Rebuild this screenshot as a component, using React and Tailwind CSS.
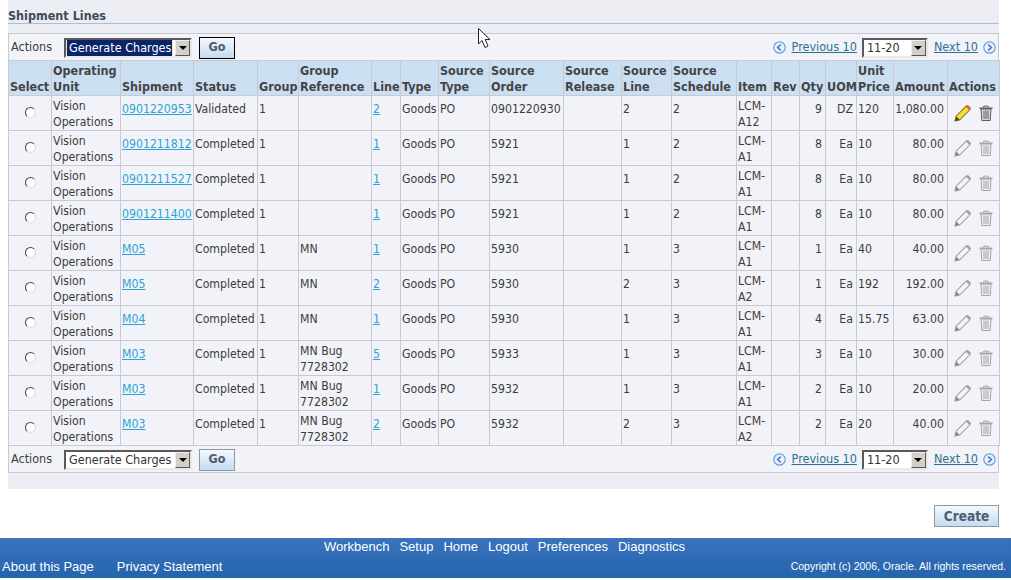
import React from 'react';

const widths = [43, 69, 73, 64, 41, 73, 29, 38, 51, 74, 58, 50, 65, 35, 28, 26, 31, 37, 54, 52];

const headers = [
  ['Select'], ['Operating', 'Unit'], ['Shipment'], ['Status'], ['Group'], ['Group', 'Reference'], ['Line'], ['Type'],
  ['Source', 'Type'], ['Source', 'Order'], ['Source', 'Release'], ['Source', 'Line'], ['Source', 'Schedule'],
  ['Item'], ['Rev'], ['Qty'], ['UOM'], ['Unit', 'Price'], ['Amount'], ['Actions'],
];

const rows = [
  { ship: '0901220953', status: 'Validated', ref: [], line: '2', order: '0901220930', srcLine: '2', sched: '2', item: 'A12', qty: '9', uom: 'DZ', price: '120', amount: '1,080.00', active: true },
  { ship: '0901211812', status: 'Completed', ref: [], line: '1', order: '5921', srcLine: '1', sched: '2', item: 'A1', qty: '8', uom: 'Ea', price: '10', amount: '80.00' },
  { ship: '0901211527', status: 'Completed', ref: [], line: '1', order: '5921', srcLine: '1', sched: '2', item: 'A1', qty: '8', uom: 'Ea', price: '10', amount: '80.00' },
  { ship: '0901211400', status: 'Completed', ref: [], line: '1', order: '5921', srcLine: '1', sched: '2', item: 'A1', qty: '8', uom: 'Ea', price: '10', amount: '80.00' },
  { ship: 'M05', status: 'Completed', ref: ['MN'], line: '1', order: '5930', srcLine: '1', sched: '3', item: 'A1', qty: '1', uom: 'Ea', price: '40', amount: '40.00' },
  { ship: 'M05', status: 'Completed', ref: ['MN'], line: '2', order: '5930', srcLine: '2', sched: '3', item: 'A2', qty: '1', uom: 'Ea', price: '192', amount: '192.00' },
  { ship: 'M04', status: 'Completed', ref: ['MN'], line: '1', order: '5930', srcLine: '1', sched: '3', item: 'A1', qty: '4', uom: 'Ea', price: '15.75', amount: '63.00' },
  { ship: 'M03', status: 'Completed', ref: ['MN Bug', '7728302'], line: '5', order: '5933', srcLine: '1', sched: '3', item: 'A1', qty: '3', uom: 'Ea', price: '10', amount: '30.00' },
  { ship: 'M03', status: 'Completed', ref: ['MN Bug', '7728302'], line: '1', order: '5932', srcLine: '1', sched: '3', item: 'A1', qty: '2', uom: 'Ea', price: '10', amount: '20.00' },
  { ship: 'M03', status: 'Completed', ref: ['MN Bug', '7728302'], line: '2', order: '5932', srcLine: '2', sched: '3', item: 'A2', qty: '2', uom: 'Ea', price: '20', amount: '40.00' },
];

function Pencil({ active }) {
  const body = active ? '#f5dc3c' : '#f4f4f4';
  const edge = active ? '#8a7a10' : '#a0a0a0';
  const tip = active ? '#e8603c' : '#a0a0a0';
  return (
    <svg width="18" height="18" viewBox="0 0 17 17">
      <path d="M1 16 L2 11.5 L11.5 2 L15 5.5 L5.5 15 Z" fill={body} stroke={edge} strokeWidth="1" />
      <path d="M11.5 2 L13 0.8 L16.2 4 L15 5.5 Z" fill={tip} />
      <path d="M1 16 L2 11.5 L5.5 15 Z" fill={active ? '#4a4a20' : '#8a8a8a'} />
    </svg>
  );
}

function Trash({ active }) {
  const c = active ? '#5e5e5e' : '#a4a4a4';
  const fill = active ? '#d8d8d8' : '#f0f0f0';
  return (
    <svg width="14" height="16" viewBox="0 0 14 16">
      <path d="M0.5 2.5 H13.5 V4 H0.5 Z" fill={c} />
      <path d="M4 2 Q7 0 10 2" fill="none" stroke={c} strokeWidth="1.2" />
      <path d="M2 4 L2.8 15.5 H11.2 L12 4 Z" fill={fill} stroke={c} strokeWidth="1" />
      <path d="M5 5.5 V14 M7 5.5 V14 M9 5.5 V14" stroke={c} strokeWidth="1" />
    </svg>
  );
}

function Arrow({ dir }) {
  return (
    <svg width="13" height="13" viewBox="0 0 13 13">
      <circle cx="6.5" cy="6.5" r="5.7" fill="#e8f1fb" stroke="#6f9fdc" strokeWidth="1.2" />
      <path d={dir === 'left' ? 'M7.8 3.6 L4.6 6.5 L7.8 9.4' : 'M5.2 3.6 L8.4 6.5 L5.2 9.4'} fill="none" stroke="#3f78c8" strokeWidth="1.5" />
    </svg>
  );
}

function SelectBox({ label, width, focused }) {
  return (
    <div className={`flex h-[20px] items-stretch border-2 border-t-[#5a5a5a] border-l-[#5a5a5a] border-r-[#e8e8e8] border-b-[#e8e8e8] bg-white ${width}`}>
      <div className="flex flex-1 items-center pl-[1px] overflow-hidden">
        <span className={`whitespace-nowrap pl-[2px] pr-[1px] leading-[16px] ${focused ? 'bg-[#0a246a] text-white outline-1 outline-dotted outline-[#f0d070]' : 'text-[#333333]'}`}>{label}</span>
      </div>
      <div className="flex w-[15px] items-center justify-center border border-t-[#eeeeee] border-l-[#eeeeee] border-r-[#555555] border-b-[#555555] bg-[#d4d0c8]">
        <div className="h-0 w-0 border-x-[4px] border-t-[4px] border-x-transparent border-t-black" />
      </div>
    </div>
  );
}

function Button({ children, focused, className }) {
  return (
    <button className={`h-[22px] rounded-none border bg-gradient-to-b from-[#f4f8fc] to-[#c4dcf0] font-bold text-[#4f5d70] ${focused ? 'border-black' : 'border-[#8a9aa8]'} ${className}`}>
      {children}
    </button>
  );
}

function ActionBar({ focused }) {
  return (
    <div className="flex h-[26px] items-center bg-[#f2f3f8] pt-[1px] pl-[2px] pr-[2px]">
      <span className="mr-[12px] text-[#3c3c3c]">Actions</span>
      <SelectBox label="Generate Charges" width="w-[128px]" focused={focused} />
      <Button focused={focused} className="ml-[7px] w-[36px]">Go</Button>
      <div className="ml-auto flex items-center">
        <Arrow dir="left" />
        <a className="ml-[6px] text-[#2b7194] underline">Previous 10</a>
        <div className="ml-[5px]"><SelectBox label="11-20" width="w-[66px]" /></div>
        <a className="ml-[6px] text-[#2b7194] underline">Next 10</a>
        <div className="ml-[5px]"><Arrow dir="right" /></div>
      </div>
    </div>
  );
}

function Cell({ children, align = 'left', multi }) {
  return (
    <td className={`border border-[#c9c8d3] align-top px-[1px] text-[12.2px] leading-[16px] whitespace-nowrap ${multi ? 'pt-[2px]' : 'pt-[5px]'} ${align === 'right' ? 'text-right pr-[3px]' : 'text-left'}`}>
      {children}
    </td>
  );
}

function Radio() {
  return (
    <div className="mx-auto mt-[11px] h-[11px] w-[11px] rounded-full border border-t-[#444444] border-l-[#444444] border-r-[#d8d8d8] border-b-[#e0e0e0] bg-white" />
  );
}

export default function App() {
  return (
    <div className="relative h-[580px] w-[1011px] overflow-hidden bg-white font-['DejaVu_Sans','Liberation_Sans',sans-serif] text-[12.5px] [font-stretch:condensed]">
      <div className="ml-[8px] h-[489px] w-[991px] bg-[#ecedf3]">
        <div className="h-[33px] pt-[8px]">
          <div className="h-[16px] border-b border-[#a6bedb] leading-[16px] font-bold text-[#3f4a58]">Shipment Lines</div>
        </div>
        <div className="border-y border-[#c9c8d3] text-[#3c3c3c]">
          <div className="border-x border-[#c9c8d3]"><ActionBar focused /></div>
          <table className="w-[991px] table-fixed border-collapse bg-[#f2f3f8]">
            <colgroup>
              {widths.map((w, i) => <col key={i} style={{ width: w }} />)}
            </colgroup>
            <thead>
              <tr className="h-[35px] bg-[#cbdff3]">
                {headers.map((h, i) => (
                  <th key={i} className="border border-[#c9c8d3] px-[1px] text-left align-bottom font-bold leading-[16px] whitespace-nowrap text-[#444444]">
                    {h.map((t, j) => <div key={j}>{t}</div>)}
                  </th>
                ))}
              </tr>
            </thead>
            <tbody>
              {rows.map((r, i) => (
                <tr key={i} className="h-[35px]">
                  <td className="border border-[#c9c8d3] align-top"><Radio /></td>
                  <Cell multi><div>Vision</div><div>Operations</div></Cell>
                  <Cell><a className="text-[#2ba3d6] underline">{r.ship}</a></Cell>
                  <Cell>{r.status}</Cell>
                  <Cell>1</Cell>
                  <Cell multi={r.ref.length > 1}>{r.ref.map((t, j) => <div key={j}>{t}</div>)}</Cell>
                  <Cell><a className="text-[#2ba3d6] underline">{r.line}</a></Cell>
                  <Cell>Goods</Cell>
                  <Cell>PO</Cell>
                  <Cell>{r.order}</Cell>
                  <Cell />
                  <Cell>{r.srcLine}</Cell>
                  <Cell>{r.sched}</Cell>
                  <Cell multi><div>LCM-</div><div>{r.item}</div></Cell>
                  <Cell />
                  <Cell align="right">{r.qty}</Cell>
                  <Cell align="right">{r.uom}</Cell>
                  <Cell>{r.price}</Cell>
                  <Cell align="right">{r.amount}</Cell>
                  <td className="border border-[#c9c8d3] align-top">
                    <div className="mt-[8px] flex items-center justify-center gap-[7px]">
                      <Pencil active={r.active} />
                      <Trash active={r.active} />
                    </div>
                  </td>
                </tr>
              ))}
            </tbody>
          </table>
          <div className="border-x border-[#c9c8d3]"><ActionBar /></div>
        </div>
      </div>

      <div className="flex h-[49px] items-start justify-end pt-[16px] pr-[12px]">
        <Button className="w-[65px] text-[13.5px]">Create</Button>
      </div>

      <footer className="h-[40px] bg-gradient-to-b from-[#3b73bd] to-[#2364ad] font-['Liberation_Sans',Arial,sans-serif] [font-stretch:normal] text-white">
        <div className="flex h-[17px] items-center justify-center gap-[10px] pr-[2px] text-[13px]">
          <span>Workbench</span><span>Setup</span><span>Home</span><span>Logout</span><span>Preferences</span><span>Diagnostics</span>
        </div>
        <div className="flex h-[23px] items-center px-[2px] text-[13px]">
          <span>About this Page</span>
          <span className="ml-[23px]">Privacy Statement</span>
          <span className="ml-auto pr-[3px] text-[10.5px]">Copyright (c) 2006, Oracle. All rights reserved.</span>
        </div>
      </footer>

      {/* mouse pointer caught in the screenshot */}
      <svg className="absolute left-[478px] top-[28px]" width="13" height="21" viewBox="0 0 13 21">
        <path d="M0.5 0.5 V16 L4 12.5 L7 19.5 L10 18 L7.2 11.5 H12 Z" fill="white" stroke="#222222" strokeWidth="1" />
      </svg>
    </div>
  );
}
